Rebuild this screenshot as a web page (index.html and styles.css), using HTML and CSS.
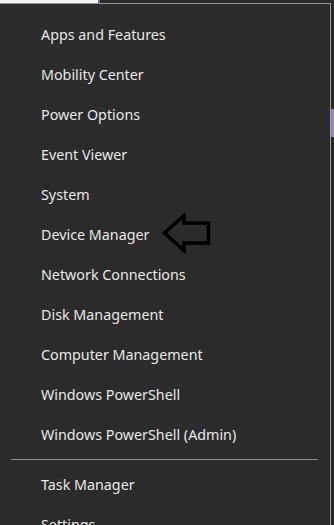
FILE: index.html
```html
<!DOCTYPE html>
<html>
<head>
<meta charset="utf-8">
<link rel="stylesheet" href="styles.css">
</head>
<body>
<div class="top">
  <div class="top-white"></div>
  <div class="top-purple"></div>
  <div class="top-dark"></div>
</div>
<div class="row">
  <div class="menu">
    <div class="item">Apps and Features</div>
    <div class="item">Mobility Center</div>
    <div class="item">Power Options</div>
    <div class="item">Event Viewer</div>
    <div class="item">System</div>
    <div class="item">Device Manager
      <svg class="arrow" width="52" height="44" viewBox="0 0 52 44">
        <path d="M2.5 20 L22 2.5 L22 10 L46.5 10 L46.5 30 L22 30 L22 37.5 Z" fill="none" stroke="#000" stroke-width="3.6" stroke-linejoin="miter"/>
      </svg>
    </div>
    <div class="item">Network Connections</div>
    <div class="item">Disk Management</div>
    <div class="item">Computer Management</div>
    <div class="item">Windows PowerShell</div>
    <div class="item">Windows PowerShell (Admin)</div>
    <div class="sep"></div>
    <div class="item">Task Manager</div>
    <div class="item">Settings</div>
  </div>
  <div class="side">
    <div class="side-gap"></div>
    <div class="side-purple"></div>
  </div>
</div>
</body>
</html>
```
FILE: styles.css
```css
html, body {
  margin: 0;
  padding: 0;
  background: #2b2b2b;
  overflow: hidden;
  height: 525px;
}
body {
  font-family: "Noto Sans", "Open Sans", sans-serif;
}
.top {
  display: flex;
  height: 3px;
}
.top-white { width: 98px; background: #f4f4f4; }
.top-purple { width: 2px; background: #7b5cb0; }
.top-dark { flex: 1; background: #2a2a2a; }
.row {
  display: flex;
}
.menu {
  width: 330px;
  border-top: 1px solid #9a9a9a;
  border-right: 1px solid #9a9a9a;
  background: #2b2b2b;
  padding-top: 11px;
  box-sizing: content-box;
}
.item {
  position: relative;
  height: 40px;
  line-height: 40px;
  padding-left: 41px;
  color: #e8e8e8;
  font-size: 14.3px;
}
.arrow {
  position: absolute;
  left: 162px;
  top: -2px;
}
.sep {
  height: 1px;
  background: #8c8c8c;
  margin: 4px 12px 5px 11px;
}
.side {
  flex: 1;
  background: #262626;
  display: flex;
  flex-direction: column;
}
.side-gap { height: 106px; }
.side-purple { height: 28px; background: #9a7fd0; }
```
